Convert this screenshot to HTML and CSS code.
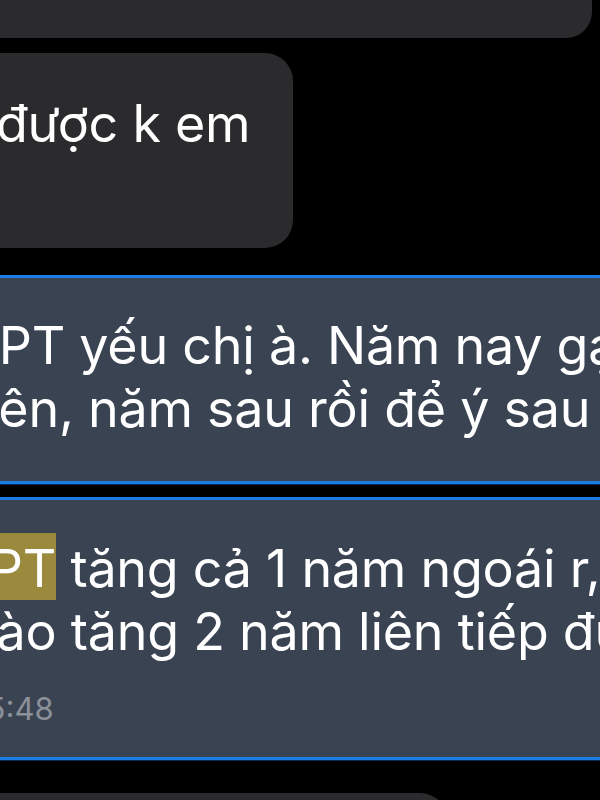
FILE: index.html
```html
<!DOCTYPE html>
<html lang="vi">

<head>
    <meta charset="UTF-8">
    <meta name="viewport" content="width=device-width, initial-scale=1.0">
    <title>Tin nhắn</title>
    <link rel="stylesheet" href="styles.css">
</head>

<body>
    <div class="chat">
        <!-- Tin nhắn trước (chỉ thấy phần đáy) -->
        <div class="bubble bubble-prev"></div>

        <!-- Tin nhắn nhận -->
        <div class="bubble bubble-msg">
            <span class="line line-duoc">được k em</span>
        </div>

        <!-- Kết quả tìm kiếm 1 -->
        <div class="result">
            <span class="line line-a1">THPT yếu chị à. Năm nay gạo</span>
            <span class="line line-a2">lên, năm sau rồi để ý sau</span>
        </div>

        <!-- Kết quả tìm kiếm 2 -->
        <div class="result result-last">
            <span class="line line-b1"><mark class="hit">THPT</mark> tăng cả 1 năm ngoái r,</span>
            <span class="line line-b2">nào tăng 2 năm liên tiếp được</span>
            <span class="time">15:48</span>
        </div>

        <!-- Tin nhắn sau (chỉ thấy phần đầu) -->
        <div class="bubble bubble-next"></div>
    </div>
</body>

</html>
```

FILE: styles.css
```css
/* Estilos generales */
body {
    margin: 0;
    padding: 0;
    background-color: #000;
    font-family: Inter, "Noto Sans", sans-serif;
    color: #fff;
    overflow: hidden;
}

.chat {
    width: 600px;
    height: 800px;
    overflow: hidden;
    display: flex;
    flex-direction: column;
}

.line {
    display: block;
    white-space: nowrap;
    font-size: 52px;
    line-height: 63px;
    letter-spacing: -0.25px;
}

/* Burbujas */
.bubble {
    background-color: #2b2b2d;
    flex-shrink: 0;
}

.bubble-prev {
    width: 592px;
    height: 38px;
    border-bottom-right-radius: 26px;
}

.bubble-msg {
    width: 293px;
    height: 195px;
    margin-top: 15px;
    padding-top: 39px;
    box-sizing: border-box;
    border-top-right-radius: 28px;
    border-bottom-right-radius: 28px;
}

.bubble-next {
    width: 448px;
    height: 40px;
    margin-top: 33px;
    border-top-right-radius: 28px;
}

.line-duoc {
    margin-left: -4px;
}

/* Resultados seleccionados */
.result {
    flex-shrink: 0;
    background-color: #3a4352;
    border-top: 3px solid #1b7de6;
    border-bottom: 3px solid #1b7de6;
    box-shadow: 0 1px 0 #062a52;
    margin-top: 27px;
    padding: 36px 0 41px;
}

.result-last {
    margin-top: 13px;
    padding: 37px 0 30px;
}

.line-a1 {
    margin-left: -73px;
}

.line-a2 {
    margin-left: -14px;
}

.line-b1 {
    margin-left: -82px;
}

.line-b2 {
    margin-left: -34px;
}

.hit {
    background-color: #9b8a3e;
    color: #fff;
    padding-top: 4px;
}

.time {
    display: block;
    margin-top: 28px;
    margin-left: -26px;
    font-size: 31px;
    line-height: 36px;
    color: #8c919a;
}
```
